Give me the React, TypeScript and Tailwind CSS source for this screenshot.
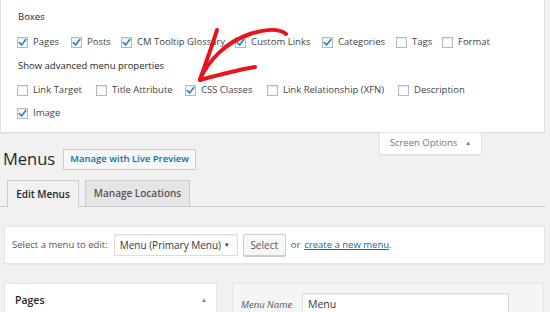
import React from 'react';

type Option = {
  label: string;
  checked: boolean;
  width: string;
};

const boxes: Option[] = [
  { label: 'Pages', checked: true, width: 'w-[54px]' },
  { label: 'Posts', checked: true, width: 'w-[50px]' },
  { label: 'CM Tooltip Glossary', checked: true, width: 'w-[114px]' },
  { label: 'Custom Links', checked: true, width: 'w-[87px]' },
  { label: 'Categories', checked: true, width: 'w-[74px]' },
  { label: 'Tags', checked: false, width: 'w-[46px]' },
  { label: 'Format', checked: false, width: '' },
];

const advanced: Option[] = [
  { label: 'Link Target', checked: false, width: 'w-[79px]' },
  { label: 'Title Attribute', checked: false, width: 'w-[89px]' },
  { label: 'CSS Classes', checked: true, width: 'w-[82px]' },
  { label: 'Link Relationship (XFN)', checked: false, width: 'w-[131px]' },
  { label: 'Description', checked: false, width: '' },
];

const Checkbox = ({ checked }: { checked: boolean }) => (
  <span className="flex h-[11px] w-[11px] shrink-0 items-center justify-center border border-[#b4b9be] bg-white shadow-[inset_0_1px_2px_rgba(0,0,0,0.1)]">
    {checked && (
      <svg width="9" height="9" viewBox="0 0 9 9">
        <path
          d="M1.3 4.6 L3.6 7 L7.8 1.6"
          fill="none"
          stroke="#1e8cbe"
          strokeWidth="1.7"
          strokeLinecap="round"
          strokeLinejoin="round"
        />
      </svg>
    )}
  </span>
);

const OptionRow = ({ options, className }: { options: Option[]; className: string }) => (
  <div className={`flex h-[14px] items-center ${className}`}>
    {options.map((o) => (
      <label key={o.label} className={`flex items-center gap-[5px] ${o.width}`}>
        <Checkbox checked={o.checked} />
        <span className="whitespace-nowrap">{o.label}</span>
      </label>
    ))}
  </div>
);

const Arrow = () => (
  <svg
    className="pointer-events-none absolute inset-0"
    width="550"
    height="312"
    viewBox="0 0 550 312"
  >
    <g fill="none" stroke="#e8141b" strokeWidth="4" strokeLinecap="round" strokeLinejoin="round">
      <path d="M200 79 C 209 60, 226 42, 250 34 C 266 29, 279 28, 286 34" />
      <path d="M217 30 C 212 46, 206 62, 200 80" />
      <path d="M200 80 C 218 75, 237 70, 255 67" />
    </g>
  </svg>
);

export default function App() {
  return (
    <div className="relative h-[312px] w-[550px] overflow-hidden bg-[#f1f1f1] font-['Open_Sans',sans-serif] text-[9.5px] text-[#444]">
      {/* screen options panel */}
      <div className="h-[133px] w-[545px] border-r border-b border-l border-[#e1e1e1] bg-white pt-[10px] pl-[16px] shadow-[0_1px_1px_rgba(0,0,0,0.04)]">
        <div className="flex h-[14px] items-center pl-[1px] text-[#23282d]">Boxes</div>
        <OptionRow options={boxes} className="mt-[11px]" />
        <div className="mt-[10px] flex h-[14px] items-center pl-[1px] text-[#23282d]">
          Show advanced menu properties
        </div>
        <OptionRow options={advanced} className="mt-[10px]" />
        <OptionRow options={[{ label: 'Image', checked: true, width: '' }]} className="mt-[9px]" />
      </div>

      <div className="flex pl-[379px]">
        <button className="flex h-[22px] w-[103px] items-center justify-center gap-[8px] border border-t-0 border-[#e1e1e1] bg-white text-[#72777c] shadow-[0_1px_1px_rgba(0,0,0,0.04)]">
          <span>Screen Options</span>
          <span className="text-[6px]">▲</span>
        </button>
      </div>

      {/* heading */}
      <div className="-mt-[6px] flex h-[21px] items-center pl-[3px]">
        <h1 className="text-[16.5px] leading-none text-[#23282d]">Menus</h1>
        <button className="ml-[8px] flex h-[21px] items-center border border-[#ccc] bg-[#f7f7f7] px-[6px] font-semibold text-[#0073aa]">
          Manage with Live Preview
        </button>
      </div>

      {/* tabs */}
      <div className="mt-[10px] flex w-[545px] gap-[6px] border-b border-[#ccc] pl-[7px]">
        <div className="-mb-px flex h-[27px] w-[72px] items-center justify-center border border-b-0 border-[#ccc] bg-[#f1f1f1] text-[10px] font-semibold text-[#23282d]">
          Edit Menus
        </div>
        <div className="flex h-[26px] w-[105px] items-center justify-center border border-b-0 border-[#ccc] bg-[#e5e5e5] text-[10px] font-semibold text-[#555]">
          Manage Locations
        </div>
      </div>

      {/* select menu */}
      <div className="mt-[19px] ml-[4px] flex h-[38px] w-[541px] items-center border border-[#e5e5e5] bg-white pl-[7px] shadow-[0_1px_1px_rgba(0,0,0,0.04)]">
        <span className="whitespace-nowrap text-[#555]">Select a menu to edit:</span>
        <div className="ml-[6px] flex h-[22px] w-[124px] items-center justify-between border border-[#ddd] bg-white pr-[7px] pl-[5px] text-[10px] whitespace-nowrap text-[#32373c] shadow-[inset_0_1px_2px_rgba(0,0,0,0.07)]">
          <span>Menu (Primary Menu)</span>
          <span className="text-[6px]">▼</span>
        </div>
        <button className="ml-[5px] flex h-[22px] w-[43px] items-center justify-center rounded-[2px] border border-[#ccc] bg-[#f7f7f7] text-[10px] text-[#555] shadow-[0_1px_0_#ccc]">
          Select
        </button>
        <span className="ml-[5px] text-[#555]">or</span>
        <a className="ml-[4px] whitespace-nowrap text-[#0073aa] underline">create a new menu</a>
        <span className="text-[#555]">.</span>
      </div>

      {/* panels */}
      <div className="mt-[19px] flex">
        <div className="ml-[4px] h-[40px] w-[213px] border border-[#e5e5e5] bg-white shadow-[0_1px_1px_rgba(0,0,0,0.04)]">
          <div className="flex h-[33px] items-center justify-between pr-[9px] pl-[10px]">
            <span className="text-[10.5px] font-semibold text-[#23282d]">Pages</span>
            <span className="text-[6px] text-[#72777c]">▲</span>
          </div>
        </div>
        <div className="ml-[15px] h-[40px] w-[312px] border border-[#e5e5e5] bg-[#f5f5f5] pt-[9px] pl-[8px]">
          <div className="flex items-center">
            <span className="w-[61px] text-[9.5px] whitespace-nowrap italic text-[#555]">Menu Name</span>
            <div className="flex h-[24px] w-[207px] items-center border border-[#ddd] bg-white pl-[5px] text-[10.5px] text-[#32373c] shadow-[inset_0_1px_2px_rgba(0,0,0,0.07)]">
              Menu
            </div>
          </div>
        </div>
      </div>

      <Arrow />
    </div>
  );
}
